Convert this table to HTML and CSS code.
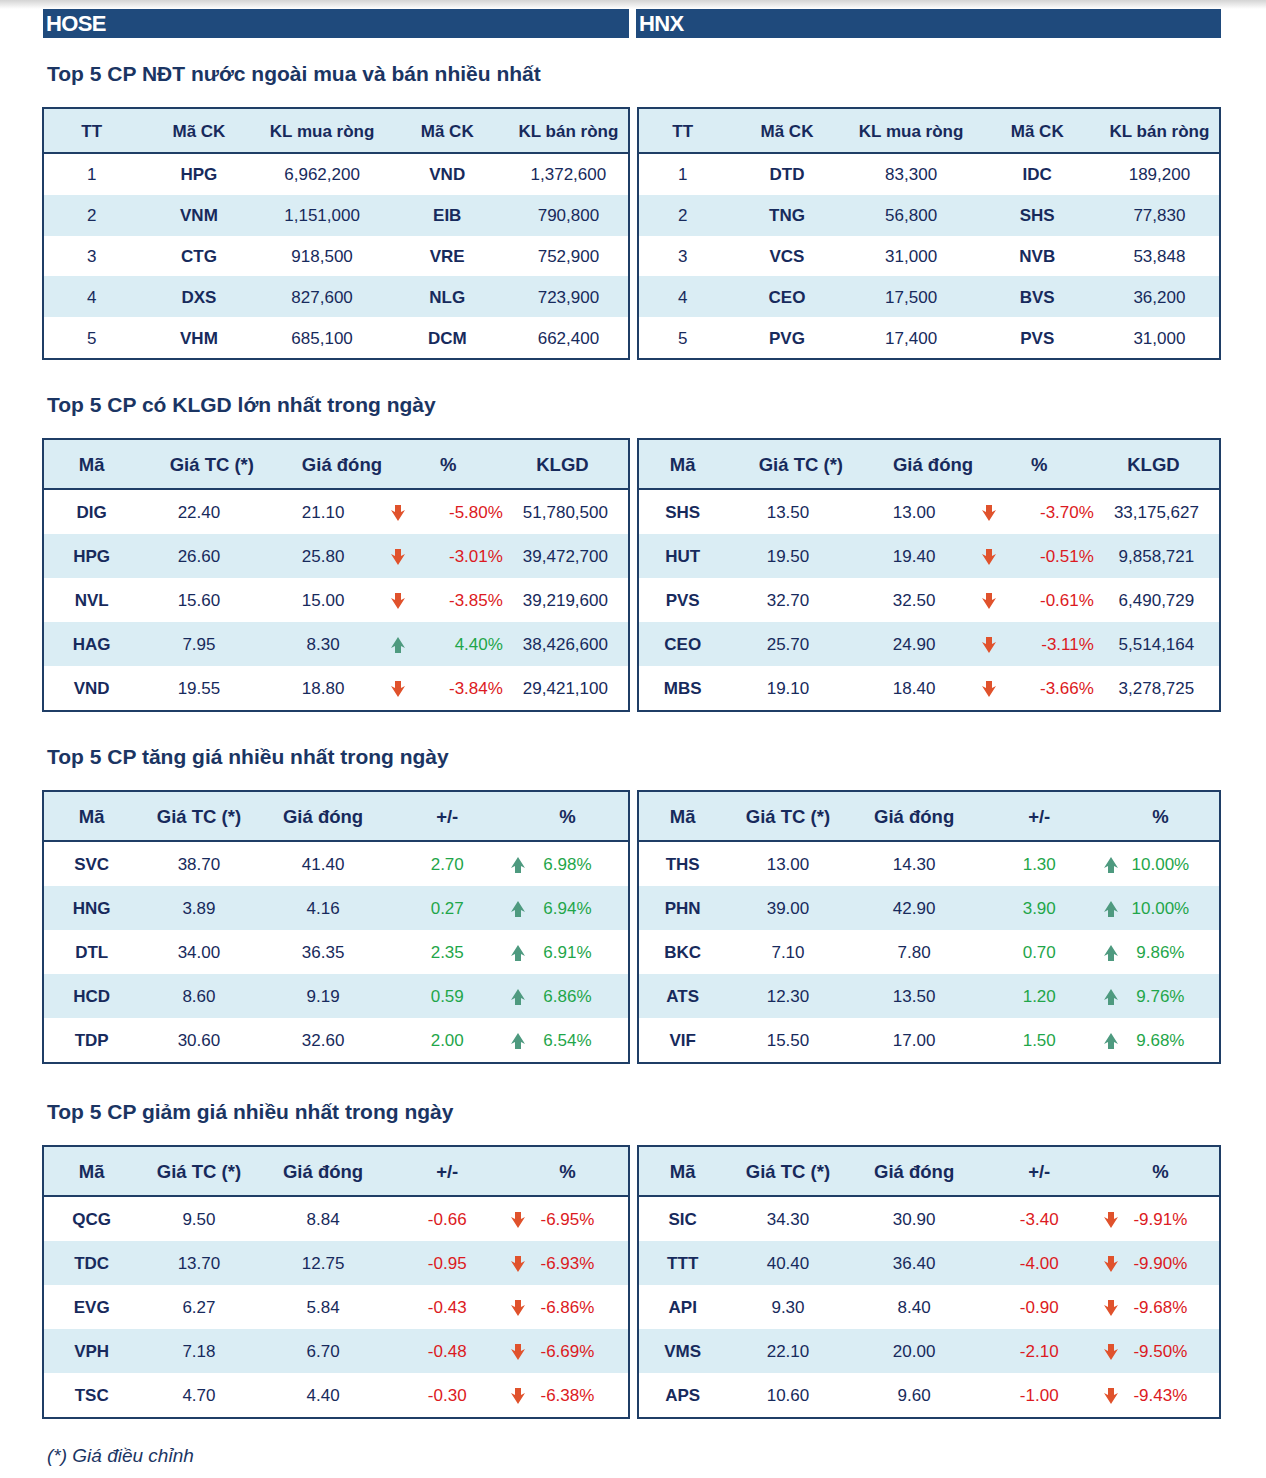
FILE: index.html
```html
<!DOCTYPE html>
<html lang="vi">
<head>
<meta charset="utf-8">
<title>Top 5 CP</title>
<link rel="stylesheet" href="styles.css">
</head>
<body>
<svg width="0" height="0" class="defs">
  <defs>
    <symbol id="dn" viewBox="0 0 14 16"><path d="M4 0H10V7L14 5L7 16L0 5L4 7Z"/></symbol>
    <symbol id="up" viewBox="0 0 14 16"><path d="M4 16H10V9L14 11L7 0L0 11L4 9Z"/></symbol>
  </defs>
</svg>
<div class="page">
  <div class="cols bars">
    <div class="bar">HOSE</div>
    <div class="bar">HNX</div>
  </div>

  <h2 class="title t-first">Top 5 CP NĐT nước ngoài mua và bán nhiều nhất</h2>
  <div class="cols">
    <div class="tbl tA">
      <div class="head"><span>TT</span><span>Mã CK</span><span>KL mua ròng</span><span>Mã CK</span><span>KL bán ròng</span></div>
      <div class="row"><span>1</span><b>HPG</b><span>6,962,200</span><b>VND</b><span>1,372,600</span></div>
      <div class="row alt"><span>2</span><b>VNM</b><span>1,151,000</span><b>EIB</b><span>790,800</span></div>
      <div class="row"><span>3</span><b>CTG</b><span>918,500</span><b>VRE</b><span>752,900</span></div>
      <div class="row alt"><span>4</span><b>DXS</b><span>827,600</span><b>NLG</b><span>723,900</span></div>
      <div class="row"><span>5</span><b>VHM</b><span>685,100</span><b>DCM</b><span>662,400</span></div>
    </div>
    <div class="tbl tA rt">
      <div class="head"><span>TT</span><span>Mã CK</span><span>KL mua ròng</span><span>Mã CK</span><span>KL bán ròng</span></div>
      <div class="row"><span>1</span><b>DTD</b><span>83,300</span><b>IDC</b><span>189,200</span></div>
      <div class="row alt"><span>2</span><b>TNG</b><span>56,800</span><b>SHS</b><span>77,830</span></div>
      <div class="row"><span>3</span><b>VCS</b><span>31,000</span><b>NVB</b><span>53,848</span></div>
      <div class="row alt"><span>4</span><b>CEO</b><span>17,500</span><b>BVS</b><span>36,200</span></div>
      <div class="row"><span>5</span><b>PVG</b><span>17,400</span><b>PVS</b><span>31,000</span></div>
    </div>
  </div>

  <h2 class="title">Top 5 CP có KLGD lớn nhất trong ngày</h2>
  <div class="cols">
    <div class="tbl tB">
      <div class="head"><span>Mã</span><span>Giá TC (*)</span><span>Giá đóng</span><span>%</span><span>KLGD</span></div>
      <div class="row"><b>DIG</b><span>22.40</span><span>21.10</span><svg class="ar dn"><use href="#dn"/></svg><span class="r neg">-5.80%</span><span>51,780,500</span></div>
      <div class="row alt"><b>HPG</b><span>26.60</span><span>25.80</span><svg class="ar dn"><use href="#dn"/></svg><span class="r neg">-3.01%</span><span>39,472,700</span></div>
      <div class="row"><b>NVL</b><span>15.60</span><span>15.00</span><svg class="ar dn"><use href="#dn"/></svg><span class="r neg">-3.85%</span><span>39,219,600</span></div>
      <div class="row alt"><b>HAG</b><span>7.95</span><span>8.30</span><svg class="ar up"><use href="#up"/></svg><span class="r pos">4.40%</span><span>38,426,600</span></div>
      <div class="row"><b>VND</b><span>19.55</span><span>18.80</span><svg class="ar dn"><use href="#dn"/></svg><span class="r neg">-3.84%</span><span>29,421,100</span></div>
    </div>
    <div class="tbl tB rt">
      <div class="head"><span>Mã</span><span>Giá TC (*)</span><span>Giá đóng</span><span>%</span><span>KLGD</span></div>
      <div class="row"><b>SHS</b><span>13.50</span><span>13.00</span><svg class="ar dn"><use href="#dn"/></svg><span class="r neg">-3.70%</span><span>33,175,627</span></div>
      <div class="row alt"><b>HUT</b><span>19.50</span><span>19.40</span><svg class="ar dn"><use href="#dn"/></svg><span class="r neg">-0.51%</span><span>9,858,721</span></div>
      <div class="row"><b>PVS</b><span>32.70</span><span>32.50</span><svg class="ar dn"><use href="#dn"/></svg><span class="r neg">-0.61%</span><span>6,490,729</span></div>
      <div class="row alt"><b>CEO</b><span>25.70</span><span>24.90</span><svg class="ar dn"><use href="#dn"/></svg><span class="r neg">-3.11%</span><span>5,514,164</span></div>
      <div class="row"><b>MBS</b><span>19.10</span><span>18.40</span><svg class="ar dn"><use href="#dn"/></svg><span class="r neg">-3.66%</span><span>3,278,725</span></div>
    </div>
  </div>

  <h2 class="title">Top 5 CP tăng giá nhiều nhất trong ngày</h2>
  <div class="cols">
    <div class="tbl tC">
      <div class="head"><span>Mã</span><span>Giá TC (*)</span><span>Giá đóng</span><span>+/-</span><span></span><span>%</span></div>
      <div class="row"><b>SVC</b><span>38.70</span><span>41.40</span><span class="pos">2.70</span><svg class="ar up"><use href="#up"/></svg><span class="pos">6.98%</span></div>
      <div class="row alt"><b>HNG</b><span>3.89</span><span>4.16</span><span class="pos">0.27</span><svg class="ar up"><use href="#up"/></svg><span class="pos">6.94%</span></div>
      <div class="row"><b>DTL</b><span>34.00</span><span>36.35</span><span class="pos">2.35</span><svg class="ar up"><use href="#up"/></svg><span class="pos">6.91%</span></div>
      <div class="row alt"><b>HCD</b><span>8.60</span><span>9.19</span><span class="pos">0.59</span><svg class="ar up"><use href="#up"/></svg><span class="pos">6.86%</span></div>
      <div class="row"><b>TDP</b><span>30.60</span><span>32.60</span><span class="pos">2.00</span><svg class="ar up"><use href="#up"/></svg><span class="pos">6.54%</span></div>
    </div>
    <div class="tbl tC rt">
      <div class="head"><span>Mã</span><span>Giá TC (*)</span><span>Giá đóng</span><span>+/-</span><span></span><span>%</span></div>
      <div class="row"><b>THS</b><span>13.00</span><span>14.30</span><span class="pos">1.30</span><svg class="ar up"><use href="#up"/></svg><span class="pos">10.00%</span></div>
      <div class="row alt"><b>PHN</b><span>39.00</span><span>42.90</span><span class="pos">3.90</span><svg class="ar up"><use href="#up"/></svg><span class="pos">10.00%</span></div>
      <div class="row"><b>BKC</b><span>7.10</span><span>7.80</span><span class="pos">0.70</span><svg class="ar up"><use href="#up"/></svg><span class="pos">9.86%</span></div>
      <div class="row alt"><b>ATS</b><span>12.30</span><span>13.50</span><span class="pos">1.20</span><svg class="ar up"><use href="#up"/></svg><span class="pos">9.76%</span></div>
      <div class="row"><b>VIF</b><span>15.50</span><span>17.00</span><span class="pos">1.50</span><svg class="ar up"><use href="#up"/></svg><span class="pos">9.68%</span></div>
    </div>
  </div>

  <h2 class="title t-last">Top 5 CP giảm giá nhiều nhất trong ngày</h2>
  <div class="cols">
    <div class="tbl tC">
      <div class="head"><span>Mã</span><span>Giá TC (*)</span><span>Giá đóng</span><span>+/-</span><span></span><span>%</span></div>
      <div class="row"><b>QCG</b><span>9.50</span><span>8.84</span><span class="neg">-0.66</span><svg class="ar dn"><use href="#dn"/></svg><span class="neg">-6.95%</span></div>
      <div class="row alt"><b>TDC</b><span>13.70</span><span>12.75</span><span class="neg">-0.95</span><svg class="ar dn"><use href="#dn"/></svg><span class="neg">-6.93%</span></div>
      <div class="row"><b>EVG</b><span>6.27</span><span>5.84</span><span class="neg">-0.43</span><svg class="ar dn"><use href="#dn"/></svg><span class="neg">-6.86%</span></div>
      <div class="row alt"><b>VPH</b><span>7.18</span><span>6.70</span><span class="neg">-0.48</span><svg class="ar dn"><use href="#dn"/></svg><span class="neg">-6.69%</span></div>
      <div class="row"><b>TSC</b><span>4.70</span><span>4.40</span><span class="neg">-0.30</span><svg class="ar dn"><use href="#dn"/></svg><span class="neg">-6.38%</span></div>
    </div>
    <div class="tbl tC rt">
      <div class="head"><span>Mã</span><span>Giá TC (*)</span><span>Giá đóng</span><span>+/-</span><span></span><span>%</span></div>
      <div class="row"><b>SIC</b><span>34.30</span><span>30.90</span><span class="neg">-3.40</span><svg class="ar dn"><use href="#dn"/></svg><span class="neg">-9.91%</span></div>
      <div class="row alt"><b>TTT</b><span>40.40</span><span>36.40</span><span class="neg">-4.00</span><svg class="ar dn"><use href="#dn"/></svg><span class="neg">-9.90%</span></div>
      <div class="row"><b>API</b><span>9.30</span><span>8.40</span><span class="neg">-0.90</span><svg class="ar dn"><use href="#dn"/></svg><span class="neg">-9.68%</span></div>
      <div class="row alt"><b>VMS</b><span>22.10</span><span>20.00</span><span class="neg">-2.10</span><svg class="ar dn"><use href="#dn"/></svg><span class="neg">-9.50%</span></div>
      <div class="row"><b>APS</b><span>10.60</span><span>9.60</span><span class="neg">-1.00</span><svg class="ar dn"><use href="#dn"/></svg><span class="neg">-9.43%</span></div>
    </div>
  </div>

  <p class="note">(*) Giá điều chỉnh</p>
</div>
</body>
</html>
```

FILE: styles.css
```css
html, body {
  margin: 0;
  padding: 0;
}
body {
  background: linear-gradient(to bottom, #d4d4d4 0px, #ececec 5px, #ffffff 9px) no-repeat;
  background-color: #fff;
  font-family: "Liberation Sans", Arial, sans-serif;
  color: #172a5c;
  width: 1266px;
  height: 1478px;
  overflow: hidden;
}
.defs {
  position: absolute;
}
.page {
  padding: 9px 0 0 42px;
}
.cols {
  display: grid;
  grid-template-columns: 588px 584px;
  column-gap: 7px;
}
.bars {
  grid-template-columns: 586px 585px;
  column-gap: 7px;
  margin-left: 1px;
}
.bar {
  height: 29px;
  background: #1f4a7c;
  color: #fff;
  font-weight: bold;
  font-size: 22px;
  line-height: 29px;
  padding-left: 3px;
  letter-spacing: -0.6px;
}
.title {
  margin: 0;
  font-size: 21px;
  font-weight: bold;
  color: #1b3563;
  line-height: 24px;
  padding: 33px 0 21px 5px;
}
.t-first {
  padding-top: 24px;
}
.t-last {
  padding-top: 36px;
}
.tbl {
  border: 2px solid #1f3e66;
  box-sizing: border-box;
}
.head, .row {
  display: grid;
  align-items: center;
  text-align: center;
}
.head {
  background: #daedf4;
  border-bottom: 2px solid #1f3e66;
  font-weight: bold;
  font-size: 18.5px;
  height: 48px;
}
.head > span {
  padding-top: 3px;
}
.row > span, .row > b {
  padding-top: 2px;
}
.row {
  font-size: 17px;
  height: 44px;
}
.row.alt {
  background: #daedf4;
}
.row b {
  font-weight: bold;
}
.tA .head {
  height: 43px;
  font-size: 17px;
}
.tA .row {
  height: 40.8px;
}
.tA .head, .tA .row {
  grid-template-columns: 96fr 120fr 128fr 124fr 120fr;
}
.tA.rt .head, .tA.rt .row {
  grid-template-columns: 88fr 122fr 128fr 126fr 120fr;
}
.tB .row {
  grid-template-columns: 96fr 120fr 130fr 20fr 96fr 126fr;
}
.tB .head {
  grid-template-columns: 96fr 146fr 116fr 98fr 132fr;
}
.tB.rt .row {
  grid-template-columns: 88fr 124fr 130fr 20fr 96fr 126fr;
}
.tB.rt .head {
  grid-template-columns: 88fr 150fr 116fr 98fr 132fr;
}
.tC .head, .tC .row {
  grid-template-columns: 96fr 120fr 130fr 120fr 22fr 78fr 22fr;
}
.tC.rt .head, .tC.rt .row {
  grid-template-columns: 88fr 124fr 130fr 122fr 22fr 78fr 20fr;
}
.r {
  text-align: right;
}
.pos {
  color: #1fa64a;
}
.neg {
  color: #dc1a22;
}
.ar {
  width: 14px;
  height: 16px;
  justify-self: center;
  margin-top: 2px;
}
.ar.dn {
  fill: #e0522c;
}
.ar.up {
  fill: #4e9a7f;
}
.note {
  margin: 0;
  padding: 26px 0 0 5px;
  font-style: italic;
  font-size: 19px;
  color: #1b3563;
}
```
